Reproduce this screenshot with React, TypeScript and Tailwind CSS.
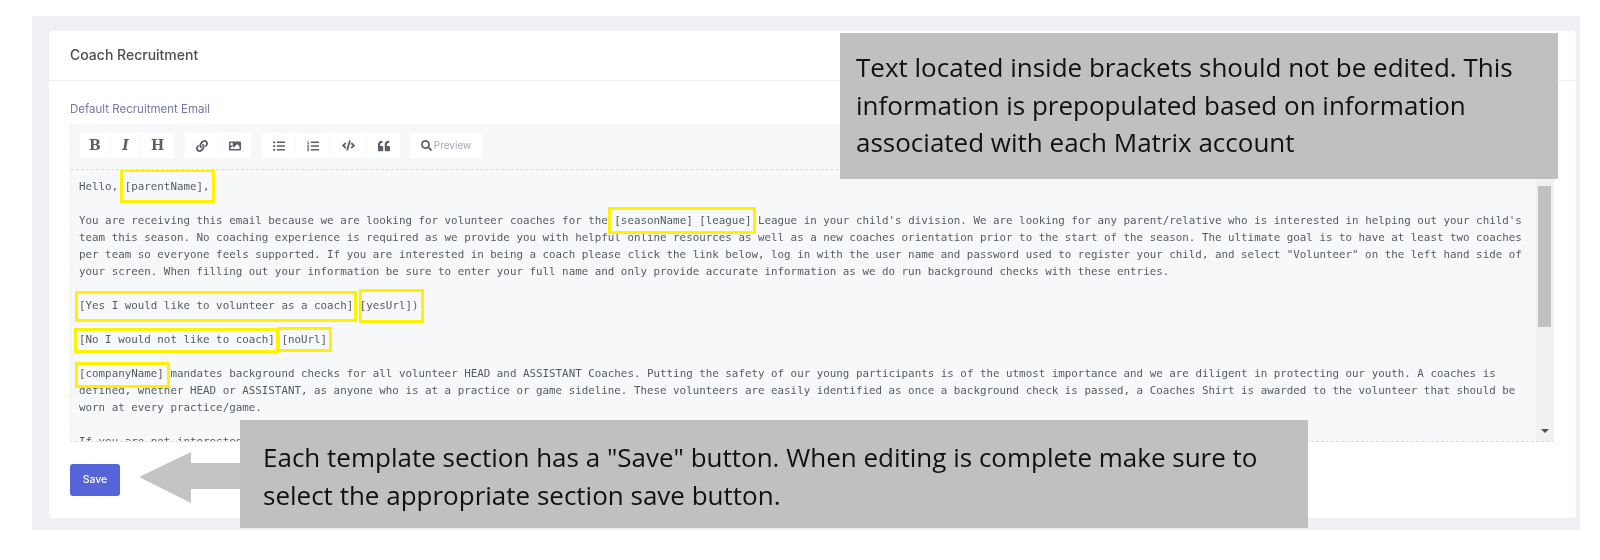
import React from 'react';
import { FaCode, FaImage, FaLink, FaListOl, FaListUl, FaQuoteLeft, FaSearch } from 'react-icons/fa';

const Mark: React.FC<{ box: string; children: React.ReactNode }> = ({ box, children }) => (
  <span className="relative">
    {children}
    <span className={`absolute border-[3px] border-[#fff200] ${box}`}></span>
  </span>
);

const ToolButton: React.FC<{ width: string; children: React.ReactNode }> = ({ width, children }) => (
  <div className={`flex h-[25px] items-center justify-center bg-white text-[#5b6068] ${width}`}>{children}</div>
);

const letter = 'font-["DejaVu_Serif",serif] text-[14px] font-bold';

const Toolbar: React.FC = () => (
  <div className="flex h-[46px] items-start border-b border-dashed border-[#d9dbe0] pl-[9px] pt-[9px]">
    <div className="flex gap-px">
      <ToolButton width="w-[30px]"><span className={letter}>B</span></ToolButton>
      <ToolButton width="w-[29px]"><span className={`${letter} italic`}>I</span></ToolButton>
      <ToolButton width="w-[33px]"><span className={letter}>H</span></ToolButton>
    </div>
    <div className="ml-[11px] flex gap-px">
      <ToolButton width="w-[33px]"><FaLink size={12} /></ToolButton>
      <ToolButton width="w-[32px]"><FaImage size={12} /></ToolButton>
    </div>
    <div className="ml-[11px] flex gap-px">
      <ToolButton width="w-[33px]"><FaListUl size={12} /></ToolButton>
      <ToolButton width="w-[33px]"><FaListOl size={12} /></ToolButton>
      <ToolButton width="w-[36px]"><FaCode size={13} /></ToolButton>
      <ToolButton width="w-[33px]"><FaQuoteLeft size={12} /></ToolButton>
    </div>
    <div className="ml-[10px] flex h-[25px] w-[72px] items-center justify-center gap-[2px] bg-white text-[#5b6068]">
      <FaSearch size={11} />
      <span className="text-[10px] text-[#a3a8b0]">Preview</span>
    </div>
  </div>
);

const EmailBody: React.FC = () => (
  <div className='h-[271px] flex-1 overflow-hidden whitespace-pre pl-[8px] pt-[8px] font-["DejaVu_Sans_Mono",monospace] text-[10.85px] leading-[17px] text-[#555b63]'>
    <div>Hello, <Mark box="-left-[5px] -right-[5px] -top-[11px] -bottom-[10px]">[parentName],</Mark></div>
    <div>&nbsp;</div>
    <div>You are receiving this email because we are looking for volunteer coaches for the <Mark box="-left-[6px] -right-[5px] -top-[7px] -bottom-[7px]">[seasonName] [league]</Mark> League in your child's division. We are looking for any parent/relative who is interested in helping out your child's</div>
    <div>team this season. No coaching experience is required as we provide you with helpful online resources as well as a new coaches orientation prior to the start of the season. The ultimate goal is to have at least two coaches</div>
    <div>per team so everyone feels supported. If you are interested in being a coach please click the link below, log in with the user name and password used to register your child, and select "Volunteer" on the left hand side of</div>
    <div>your screen. When filling out your information be sure to enter your full name and only provide accurate information as we do run background checks with these entries.</div>
    <div>&nbsp;</div>
    <div><Mark box="-left-[4px] -right-[4px] -top-[8px] -bottom-[10px]">[Yes I would like to volunteer as a coach]</Mark> <Mark box="-left-[1px] -right-[5px] -top-[10px] -bottom-[11px]">[yesUrl])</Mark></div>
    <div>&nbsp;</div>
    <div><Mark box="-left-[5px] -right-[4px] -top-[5px] -bottom-[7px]">[No I would not like to coach]</Mark> <Mark box="-left-[4px] -right-[5px] -top-[6px] -bottom-[6px]">[noUrl]</Mark></div>
    <div>&nbsp;</div>
    <div><Mark box="-left-[4px] -right-[6px] -top-[5px] -bottom-[8px]">[companyName]</Mark> mandates background checks for all volunteer HEAD and ASSISTANT Coaches. Putting the safety of our young participants is of the utmost importance and we are diligent in protecting our youth. A coaches is</div>
    <div>defined, whether HEAD or ASSISTANT, as anyone who is at a practice or game sideline. These volunteers are easily identified as once a background check is passed, a Coaches Shirt is awarded to the volunteer that should be</div>
    <div>worn at every practice/game.</div>
    <div>&nbsp;</div>
    <div>If you are not interested in coaching this season please click the link above.</div>
  </div>
);

const Scrollbar: React.FC = () => (
  <div className="flex h-[271px] w-[17px] flex-col items-center bg-[#f1f1f1]">
    <div className="mt-[16px] h-[141px] w-[13px] bg-[#c1c1c1]"></div>
    <div className="mt-auto mb-[8px] h-0 w-0 border-x-[4px] border-t-[4px] border-x-transparent border-t-[#505050]"></div>
  </div>
);

export default function App() {
  return (
    <div className='relative h-[560px] bg-white pl-[32px] pt-[16px] font-["Inter",sans-serif] blur-[0.4px]'>
      <div className="h-[514px] w-[1548px] bg-[#eff0f5] pl-[17px] pt-[15px]">
        <div className="h-[487px] w-[1527px] rounded-[4px] bg-white">
          <div className="flex h-[50px] items-center border-b border-[#eff0f3] pb-[2px] pl-[21px] text-[14px] font-medium text-[#495057]">
            Coach Recruitment
          </div>
          <div className="pl-[21px] pt-[20px]">
            <p className="h-[23px] text-[11.5px] leading-[16px] text-[#737aa0]">Default Recruitment Email</p>
            <div className="w-[1484px] border-x border-b border-dashed border-x-[#e8eaee] border-b-[#d9dbe0] bg-[#f7f8fa]">
              <Toolbar />
              <div className="flex">
                <EmailBody />
                <Scrollbar />
              </div>
            </div>
            <button className="mt-[22px] flex h-[32px] w-[50px] items-center justify-center rounded-[3px] bg-[#5664d9] text-[10.5px] font-medium text-white">
              Save
            </button>
          </div>
        </div>
      </div>

      <div className='absolute left-[840px] top-[33px] h-[146px] w-[718px] bg-[#c0c0c0] pl-[16px] pt-[16px] font-["Open_Sans",sans-serif] text-[26px] leading-[37.5px] text-[#111]'>
        Text located inside brackets should not be edited. This<br />
        information is prepopulated based on information<br />
        associated with each Matrix account
      </div>

      <div className='absolute left-[240px] top-[420px] h-[108px] w-[1068px] bg-[#c0c0c0] pl-[23px] pt-[19px] font-["Open_Sans",sans-serif] text-[26px] leading-[37.5px] text-[#111]'>
        Each template section has a "Save" button. When editing is complete make sure to<br />
        select the appropriate section save button.
      </div>

      <svg className="absolute left-[139px] top-[452px]" width="101" height="51" viewBox="0 0 101 51">
        <path d="M0 25 L52 0 V11 H101 V37 H52 V51 Z" fill="#c4c4c4" />
      </svg>
    </div>
  );
}
